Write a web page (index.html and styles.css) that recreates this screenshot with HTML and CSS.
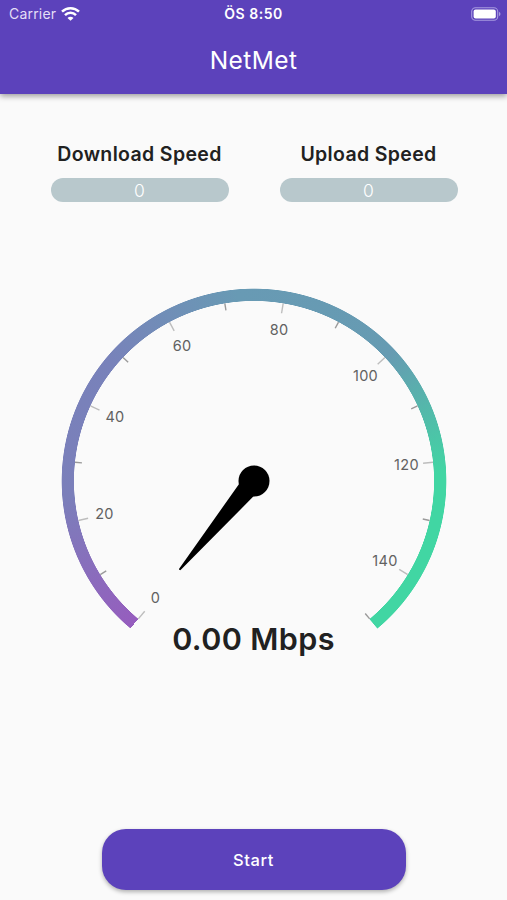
FILE: index.html
```html
<!DOCTYPE html>
<html lang="en">
<head>
  <meta charset="UTF-8">
  <meta name="viewport" content="width=device-width, initial-scale=1.0">
  <title>NetMet</title>
  <link rel="stylesheet" href="styles.css">
</head>
<body>
  <header class="app-bar">
    <div class="status-bar">
      <div class="carrier">
        <span>Carrier</span>
        <svg width="19" height="14" viewBox="0 0 19 14" fill="none" stroke="#fff" stroke-width="2.5">
          <path d="M1 4.7a12.2 12.2 0 0 1 17 0"/>
          <path d="M4 8.1a7.8 7.8 0 0 1 11 0"/>
          <path d="M9.5 13.8L6.5 10.9a4.2 4.2 0 0 1 6 0z" fill="#fff" stroke="none"/>
        </svg>
      </div>
      <div class="time">ÖS 8:50</div>
      <div class="battery">
        <svg width="30" height="14" viewBox="0 0 30 14">
          <rect x="0.7" y="0.7" width="26" height="12.6" rx="3.8" fill="none" stroke="#a79be0" stroke-width="1.1"/>
          <rect x="2.6" y="2.5" width="22.2" height="9" rx="2" fill="#fff"/>
          <path d="M28 4.8v4.4c2-.8 2-3.6 0-4.4z" fill="#a79be0"/>
        </svg>
      </div>
    </div>
    <h1>NetMet</h1>
  </header>

  <main>
    <section class="speeds">
      <div class="speed">
        <h2>Download Speed</h2>
        <div class="value">0</div>
      </div>
      <div class="speed">
        <h2>Upload Speed</h2>
        <div class="value">0</div>
      </div>
    </section>

    <section class="gauge">
      <div class="track"></div>
      <!-- 0 sits at 130deg, every 10 Mbps is 18.667deg -->
      <svg class="dial" width="386" height="386" viewBox="-193 -193 386 386">
        <g class="major">
          <line x1="170" x2="180" transform="rotate(130)"/>
          <line x1="170" x2="180" transform="rotate(167.33)"/>
          <line x1="170" x2="180" transform="rotate(204.67)"/>
          <line x1="170" x2="180" transform="rotate(242)"/>
          <line x1="170" x2="180" transform="rotate(279.33)"/>
          <line x1="170" x2="180" transform="rotate(316.67)"/>
          <line x1="170" x2="180" transform="rotate(354)"/>
          <line x1="170" x2="180" transform="rotate(31.33)"/>
        </g>
        <g class="minor">
          <line x1="173" x2="180" transform="rotate(148.67)"/>
          <line x1="173" x2="180" transform="rotate(186)"/>
          <line x1="173" x2="180" transform="rotate(223.33)"/>
          <line x1="173" x2="180" transform="rotate(260.67)"/>
          <line x1="173" x2="180" transform="rotate(298)"/>
          <line x1="173" x2="180" transform="rotate(335.33)"/>
          <line x1="173" x2="180" transform="rotate(12.67)"/>
          <line x1="173" x2="180" transform="rotate(50)"/>
        </g>
        <g class="labels">
          <text x="-98.5" y="122">0</text>
          <text x="-149.5" y="38">20</text>
          <text x="-139" y="-59.5">40</text>
          <text x="-72" y="-130.5">60</text>
          <text x="25" y="-146">80</text>
          <text x="111.5" y="-100">100</text>
          <text x="152.5" y="-11">120</text>
          <text x="131" y="85">140</text>
        </g>
        <path class="needle" d="M0 -10.5L115 -1a1 1 0 0 1 0 2L0 10.5z" transform="rotate(130)"/>
        <circle class="needle" r="15.5"/>
      </svg>
    </section>
    <div class="result">0.00 Mbps</div>

    <button type="button" class="start">Start</button>
  </main>
</body>
</html>
```
FILE: styles.css
```css
* {
  box-sizing: border-box;
}
body {
  margin: 0;
  height: 900px;
  overflow: hidden;
  background-color: #fafafa;
  color: #212121;
  font-family: Inter, "Liberation Sans", sans-serif;
}
.app-bar {
  height: 94px;
  background-color: #5c42bb;
  color: white;
  box-shadow: 0 2px 6px rgba(0, 0, 0, 0.4);
}
.status-bar {
  display: grid;
  grid-template-columns: 1fr auto 1fr;
  align-items: center;
  height: 27px;
  padding: 0 6px 0 9px;
  font-size: 14px;
}
.carrier {
  display: flex;
  align-items: center;
  gap: 5px;
  color: #e4dff6;
  letter-spacing: 0.2px;
}
.time {
  font-weight: 600;
  letter-spacing: 0.5px;
  margin-right: 3px;
}
.battery {
  display: flex;
  justify-content: flex-end;
}
h1 {
  margin: 17px 0 0;
  font-size: 24.5px;
  line-height: 32px;
  font-weight: 400;
  letter-spacing: 0.4px;
  text-align: center;
}
main {
  display: flex;
  flex-direction: column;
  align-items: center;
}
.speeds {
  display: flex;
  gap: 51px;
  padding: 48px 0 0 1px;
}
.speed {
  width: 178px;
  text-align: center;
}
h2 {
  margin: 0 0 12px;
  font-size: 19.5px;
  line-height: 24px;
  font-weight: 600;
  letter-spacing: 0.35px;
  white-space: nowrap;
}
.value {
  height: 24px;
  border-radius: 12px;
  background-color: #b8c8cc;
  color: white;
  font-size: 17.5px;
  font-weight: 300;
  line-height: 25px;
}
.gauge {
  display: grid;
  width: 386px;
  height: 386px;
  margin-top: 86px;
}
.track, .dial {
  grid-area: 1 / 1;
}
.track {
  background: conic-gradient(from 220deg, #965dbe 0deg, #7b7fba 45deg, #7882ba 90deg, #689ab4 135deg, #669bb2 187deg, #41d6a3 228deg, #41d6a3 280deg, transparent 280.2deg);
  mask: radial-gradient(circle, transparent 179.7px, black 180.3px, black 192px, transparent 192.7px);
}
.major line {
  stroke: #bdbdbd;
  stroke-width: 1.4;
}
.minor line {
  stroke: #9a9a9a;
  stroke-width: 1.4;
}
.labels {
  fill: #616161;
  font-size: 14.5px;
  letter-spacing: 0.3px;
  text-anchor: middle;
}
.needle {
  fill: black;
}
.result {
  height: 40px;
  margin-top: -55px;
  font-size: 30.5px;
  line-height: 40px;
  font-weight: 600;
  letter-spacing: 0.4px;
}
.start {
  width: 304px;
  height: 61px;
  margin-top: 170px;
  border: none;
  border-radius: 24px;
  background-color: #5c42bb;
  box-shadow: 0 2px 4px rgba(0, 0, 0, 0.3);
  color: white;
  font-family: inherit;
  font-size: 16.5px;
  font-weight: 500;
  letter-spacing: 0.6px;
  cursor: pointer;
}
```
